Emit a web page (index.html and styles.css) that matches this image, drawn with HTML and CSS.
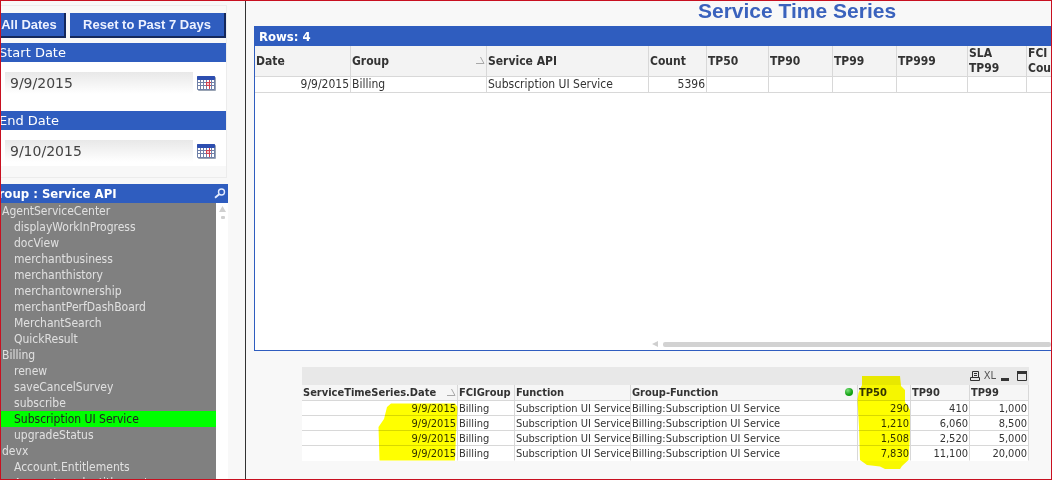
FILE: index.html
```html
<!DOCTYPE html>
<html lang="en">
<head>
<meta charset="utf-8">
<title>Service Time Series</title>
<link rel="stylesheet" href="styles.css">
</head>
<body>
<div class="app">
  <aside class="sidebar">
    <div class="sidebar-inner">
      <section class="filters">
        <div class="presets">
          <button class="preset preset-all" type="button">All Dates</button>
          <button class="preset preset-week" type="button">Reset to Past 7 Days</button>
        </div>
        <div class="field">
          <label class="bar bar-date" for="start">Start Date</label>
          <div class="date-row">
            <input class="date" id="start" type="text" value="9/9/2015">
            <button class="cal" type="button" aria-label="Pick start date"><svg width="19" height="15" viewBox="0 0 19 15"><use href="#cal"/></svg></button>
          </div>
        </div>
        <div class="field field-end">
          <label class="bar bar-date" for="end">End Date</label>
          <div class="date-row">
            <input class="date" id="end" type="text" value="9/10/2015">
            <button class="cal" type="button" aria-label="Pick end date"><svg width="19" height="15" viewBox="0 0 19 15"><use href="#cal"/></svg></button>
          </div>
        </div>
      </section>
      <section class="listbox">
        <h2 class="bar bar-group">Group : Service API
          <button class="search" type="button" aria-label="Search"><svg width="12" height="12" viewBox="0 0 12 12"><circle cx="7.5" cy="4" r="3" fill="none" stroke="#e4ecff" stroke-width="1.4"/><path d="M5.2 6.3L1 9.800" stroke="#e4ecff" stroke-width="1.8"/></svg></button>
        </h2>
        <div class="list-body">
          <ul class="list">
            <li><button class="item" type="button">AgentServiceCenter</button></li>
            <li><button class="item sub" type="button">displayWorkInProgress</button></li>
            <li><button class="item sub" type="button">docView</button></li>
            <li><button class="item sub" type="button">merchantbusiness</button></li>
            <li><button class="item sub" type="button">merchanthistory</button></li>
            <li><button class="item sub" type="button">merchantownership</button></li>
            <li><button class="item sub" type="button">merchantPerfDashBoard</button></li>
            <li><button class="item sub" type="button">MerchantSearch</button></li>
            <li><button class="item sub" type="button">QuickResult</button></li>
            <li><button class="item" type="button">Billing</button></li>
            <li><button class="item sub" type="button">renew</button></li>
            <li><button class="item sub" type="button">saveCancelSurvey</button></li>
            <li><button class="item sub" type="button">subscribe</button></li>
            <li><button class="item sub selected" type="button">Subscription UI Service</button></li>
            <li><button class="item sub" type="button">upgradeStatus</button></li>
            <li><button class="item" type="button">devx</button></li>
            <li><button class="item sub" type="button">Account.Entitlements</button></li>
            <li><button class="item sub" type="button">Account.readentitlements</button></li>
          </ul>
          <div class="scroll"><svg width="12" height="18" viewBox="0 0 12 18"><path d="M3 9L6.5 3L10 9Z" fill="#d0d0d0"/><rect x="5" y="13" width="4" height="3" rx="1" fill="#d0d0d0"/></svg></div>
        </div>
      </section>
    </div>
  </aside>
  <main class="main">
    <h1 class="title">Service Time Series</h1>
    <section class="panel">
      <h2 class="bar bar-rows">Rows: 4</h2>
      <table class="grid">
        <colgroup><col class="w96"><col class="w136"><col class="w162"><col class="w58"><col class="w62"><col class="w64"><col class="w64"><col class="w71"><col class="w59"><col class="w59"></colgroup>
        <thead><tr><th>Date</th><th class="sorted">Group<svg class="sort" width="10" height="9" viewBox="0 0 10 9"><path d="M1 7.5H9L5.500 1" fill="none" stroke="#a8a8a8"/></svg></th><th>Service API</th><th>Count</th><th>TP50</th><th>TP90</th><th>TP99</th><th>TP999</th><th>SLA TP99</th><th>FCI Count</th></tr></thead>
        <tbody><tr><td class="num">9/9/2015</td><td>Billing</td><td>Subscription UI Service</td><td class="num">5396</td><td></td><td></td><td></td><td></td><td></td><td></td></tr></tbody>
      </table>
      <div class="hscroll"><svg width="6" height="8" viewBox="0 0 6 8"><path d="M6 1V7L0 4Z" fill="#cfcfcf"/></svg><span class="thumb"></span></div>
    </section>
    <section class="detail">
      <div class="tools">
        <button class="tool" type="button" aria-label="Print"><svg width="10" height="10" viewBox="0 0 10 10" fill="none" stroke="#333"><path d="M2.5 6V.5H8.5V6M4 2.5H7M4 4.5H7M.5 9.5V6.5H9.5V9.5Z"/></svg></button>
        <button class="tool tool-xl" type="button">XL</button>
        <button class="tool" type="button" aria-label="Minimize"><svg width="10" height="10" viewBox="0 0 10 10"><path d="M1 7H9V10H1Z" fill="#333"/></svg></button>
        <button class="tool tool-max" type="button" aria-label="Maximize"><svg width="10" height="10" viewBox="0 0 10 10"><path d="M.5 1V9.5H9.5V1" fill="none" stroke="#333"/><path d="M0 0H10V3H0Z" fill="#333"/></svg></button>
      </div>
      <table class="grid small">
        <colgroup><col class="w156"><col class="w57"><col class="w116"><col class="w227"><col class="w53"><col class="w59"><col class="w59"></colgroup>
        <thead><tr><th class="sorted">ServiceTimeSeries.Date<svg class="sort" width="10" height="9" viewBox="0 0 10 9"><path d="M1 7.5H9L5.500 1" fill="none" stroke="#a8a8a8"/></svg></th><th>FCIGroup</th><th>Function</th><th class="sorted">Group-Function<span class="dot"></span></th><th>TP50</th><th>TP90</th><th>TP99</th></tr></thead>
        <tbody>
          <tr><td class="num">9/9/2015</td><td>Billing</td><td>Subscription UI Service</td><td>Billing:Subscription UI Service</td><td class="num">290</td><td class="num">410</td><td class="num">1,000</td></tr>
          <tr><td class="num">9/9/2015</td><td>Billing</td><td>Subscription UI Service</td><td>Billing:Subscription UI Service</td><td class="num">1,210</td><td class="num">6,060</td><td class="num">8,500</td></tr>
          <tr><td class="num">9/9/2015</td><td>Billing</td><td>Subscription UI Service</td><td>Billing:Subscription UI Service</td><td class="num">1,508</td><td class="num">2,520</td><td class="num">5,000</td></tr>
          <tr><td class="num">9/9/2015</td><td>Billing</td><td>Subscription UI Service</td><td>Billing:Subscription UI Service</td><td class="num">7,830</td><td class="num">11,100</td><td class="num">20,000</td></tr>
        </tbody>
      </table>
      <svg class="marker" width="727" height="110" viewBox="302 367 727 110" fill="#ff0"><path d="M387 407L391 403.500H455L457.500 407L456 435L455 460.500H379.500L378.500 427L384 419Z"/><path d="M862 376H900L901 386L905 390V402L910 410V435L908.500 460L902 466L900 469H885L880 466.500L867 465L860 460L859 427L857.500 400L858.500 393L862 385Z"/></svg>
    </section>
  </main>
</div>
<svg width="0" height="0" class="defs"><defs><g id="cal"><rect x="1" y="1" width="18" height="14" rx="1" fill="#9aa4b4"/><rect width="18" height="14" rx="1" fill="#6f80a8"/><rect width="18" height="4" rx="1" fill="#2d4eb0"/><path d="M1 4h2v2h-2zM4 4h2v2h-2zM7 4h2v2h-2zM10 4h2v2h-2zM13 4h1v2h-1zM15 4h2v2h-2zM1 7h2v2h-2zM4 7h2v2h-2zM7 7h2v2h-2zM13 7h1v2h-1zM15 7h2v2h-2zM1 10h2v3h-2zM4 10h2v3h-2zM7 10h2v3h-2zM10 10h2v3h-2zM13 10h1v3h-1zM15 10h2v3h-2z" fill="#fff"/><path d="M10 7h2v2h-2z" fill="#f8c8c8"/><path d="M9 6.500h5M9 9.500h5M9.500 6v4M12.500 4v9" fill="none" stroke="#d04050"/></g></defs></svg>
</body>
</html>
```
FILE: styles.css
```css
* { box-sizing: border-box; }
body {
  margin: 0;
  font-family: "DejaVu Sans Condensed", "DejaVu Sans", sans-serif;
  font-stretch: condensed;
  font-size: 12px;
  color: #333;
}
button { font: inherit; padding: 0; border: 0; background: none; color: inherit; }
h1, h2, ul { margin: 0; padding: 0; list-style: none; }
svg { display: block; }
.defs { position: absolute; }
.app {
  display: flex;
  height: 100vh;
  border: 1px solid #c81020;
  background: #f8f8f8;
  overflow: hidden;
}
.sidebar { flex: 0 0 245px; border-right: 1px solid #333; overflow: hidden; }
.sidebar-inner { margin-left: -12px; padding: 4px 17px 0 0; }
.bar {
  display: flex;
  align-items: center;
  height: 19px;
  background: #2f5dbf;
  color: #fff;
  font-family: "DejaVu Sans", sans-serif;
  font-stretch: normal;
  font-size: 13px;
  font-weight: normal;
}
.filters { margin-right: 1px; height: 173px; border: 1px solid #ececec; }
.presets { display: flex; gap: 4px; padding-top: 7px; }
.preset {
  height: 25px;
  background: #2f5dbf;
  color: #eef2ff;
  border-right: 2px solid #14285c;
  border-bottom: 2px solid #14285c;
  font-family: "Liberation Sans", Arial, sans-serif;
  font-size: 13px;
  font-weight: bold;
  white-space: nowrap;
}
.preset-all { width: 76px; padding-left: 4px; }
.preset-week { flex: 1; }
.field { margin-top: 5px; height: 68px; background: #fff; }
.field-end { margin-top: 0; height: 55px; }
.bar-date { padding-left: 9px; }
.date-row { display: flex; align-items: center; gap: 4px; padding: 10px 10px 0 15px; }
.date {
  flex: 1;
  min-width: 0;
  height: 22px;
  padding: 0 5px;
  border: 0;
  background: linear-gradient(#e8e8e8, #fff);
  color: #444;
  font-family: "DejaVu Sans", sans-serif;
  font-size: 14px;
}
.listbox { margin-top: 6px; }
.bar-group {
  justify-content: space-between;
  padding: 0 2px 0 0;
}
.bar-group, .bar-rows {
  font-family: "DejaVu Sans Condensed", "DejaVu Sans", sans-serif;
  font-stretch: condensed;
  font-weight: bold;
}
.list-body { display: flex; background: #fff; }
.list { flex: 1; background: #808080; }
.item {
  display: block;
  width: 100%;
  height: 16px;
  padding-left: 13px;
  line-height: 16px;
  text-align: left;
  color: #e0e0e0;
}
.sub { padding-left: 25px; }
.selected { background: #0f0; color: #222; }
.scroll { width: 12px; }
.main { flex: 1; min-width: 0; padding-left: 8px; }
.title {
  height: 25px;
  padding-left: 444px;
  line-height: 20px;
  font-family: "Liberation Sans", Arial, sans-serif;
  font-size: 21px;
  color: #3a62bd;
  white-space: nowrap;
}
.panel {
  display: flex;
  flex-direction: column;
  height: 325px;
  border: 1px solid #2f5dbf;
  border-width: 0 0 1px 1px;
  background: #fff;
  overflow: hidden;
}
.bar-rows { flex: none; height: 20px; padding-left: 4px; }
.grid { table-layout: fixed; border-collapse: separate; border-spacing: 0; width: 831px; }
.grid th, .grid td {
  height: 16px;
  padding: 0 1px;
  border-right: 1px solid #d8d8d8;
  border-bottom: 1px solid #d8d8d8;
  text-align: left;
  line-height: 15px;
  white-space: nowrap;
}
.grid th { height: 31px; background: #f3f3f3; white-space: normal; }
.grid .num { text-align: right; }
.grid .sorted { position: relative; }
.sort { position: absolute; right: 1px; top: 50%; margin-top: -5px; }
.hscroll { display: flex; align-items: center; gap: 5px; margin: auto 0 2px 397px; }
.thumb { flex: 1; height: 5px; border-radius: 2px; background: #d2d2d2; }
.detail { position: relative; width: 727px; margin: 16px 0 0 48px; }
.tools { display: flex; align-items: center; justify-content: flex-end; gap: 4px; height: 18px; padding-right: 2px; background: #e8e8e8; }
.tool-xl { font-size: 11px; line-height: 12px; color: #555; }
.tool-max { margin-left: 3px; }
.small { width: 727px; background: #fff; font-size: 11px; }
.small th, .small td { height: 15px; line-height: 14px; }
.small td { padding-top: 1px; line-height: 13px; }
.small th { height: 16px; padding-top: 1px; white-space: nowrap; background: #f6f6f6; }
.small tr:last-child td { border-bottom-color: #fff; }
.dot { position: absolute; right: 4px; top: 3px; width: 8px; height: 8px; border-radius: 50%; background: radial-gradient(circle at 35% 30%, #7be07b, #12a012 60%); }
.marker { position: absolute; left: 0; top: 0; mix-blend-mode: multiply; pointer-events: none; }
.w53 { width: 53px; } .w57 { width: 57px; } .w58 { width: 58px; } .w59 { width: 59px; }
.w62 { width: 62px; } .w64 { width: 64px; } .w71 { width: 71px; } .w96 { width: 96px; }
.w116 { width: 116px; } .w136 { width: 136px; } .w156 { width: 156px; } .w162 { width: 162px; } .w227 { width: 227px; }
```
